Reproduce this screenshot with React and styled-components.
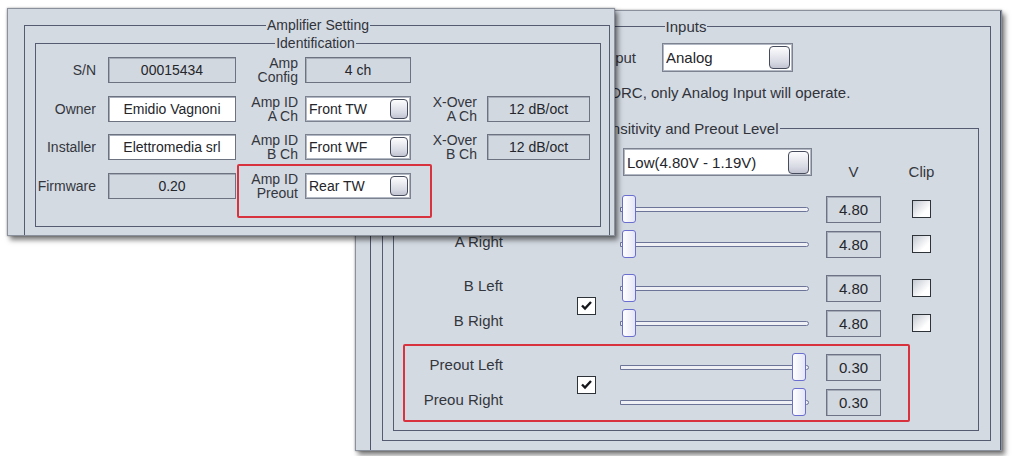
import React from 'react';
import styled, { createGlobalStyle } from 'styled-components';

const identRows = [
  [
    { label: 'S/N' }, { value: '00015434' },
    { label: 'Amp\nConfig' }, { value: '4 ch' },
    null, null,
  ],
  [
    { label: 'Owner' }, { value: 'Emidio Vagnoni', editable: true },
    { label: 'Amp ID\nA Ch' }, { combo: 'Front TW' },
    { label: 'X-Over\nA Ch' }, { value: '12 dB/oct' },
  ],
  [
    { label: 'Installer' }, { value: 'Elettromedia srl', editable: true },
    { label: 'Amp ID\nB Ch' }, { combo: 'Front WF' },
    { label: 'X-Over\nB Ch' }, { value: '12 dB/oct' },
  ],
  [
    { label: 'Firmware' }, { value: '0.20' },
    { label: 'Amp ID\nPreout' }, { combo: 'Rear TW' },
    null, null,
  ],
];

// padding between a label and its field, per label column
const labelGaps = [12, 7, 10];

const pairs = [
  {
    linked: true,
    rows: [
      { label: 'A Left', level: 0, value: '4.80', clip: true },
      { label: 'A Right', level: 0, value: '4.80', clip: true },
    ],
  },
  {
    linked: true,
    rows: [
      { label: 'B Left', level: 0, value: '4.80', clip: true },
      { label: 'B Right', level: 0, value: '4.80', clip: true },
    ],
  },
  {
    linked: true,
    rows: [
      { label: 'Preout Left', level: 1, value: '0.30' },
      { label: 'Preou Right', level: 1, value: '0.30' },
    ],
  },
];

const GlobalStyle = createGlobalStyle`
  html, body {
    margin: 0;
    padding: 0;
    background: #ffffff;
  }
  body {
    font-family: "Liberation Sans", Arial, sans-serif;
    color: #30333a;
  }
`;

const Desk = styled.div`
  position: relative;
  width: 1023px;
  height: 456px;
  overflow: hidden;
  background: #ffffff;
`;

const Window = styled.div`
  position: absolute;
  left: ${p => p.$x}px;
  top: ${p => p.$y}px;
  width: ${p => p.$w}px;
  height: ${p => p.$h}px;
  box-sizing: border-box;
  background: #d4dae2;
  border: 1px solid #8b919c;
  box-shadow: 0 0 2px rgba(0, 0, 0, 0.35), 3px 4px 5px rgba(0, 0, 0, 0.5);
  overflow: hidden;
`;

const FrontBody = styled.div`
  padding: 9px 4px 0 16px;
`;

const BackBody = styled.div`
  height: 100%;
  box-sizing: border-box;
  padding-left: 14px;
`;

const Client = styled.div`
  height: 100%;
  box-sizing: border-box;
  border-left: 1px solid #4f566b;
  border-right: 1px solid #4f566b;
  padding: 8px 9px 0 11px;
`;

const Group = styled.fieldset`
  margin: 0;
  min-width: 0;
  border: 1px solid #555c72;
  padding: ${p => p.$pad};
`;

const Legend = styled.legend`
  margin: 0 auto;
  padding: 0 1px;
  font-size: ${p => p.$size}px;
  line-height: ${p => p.$size}px;
  color: #30333a;
`;

const IdGrid = styled.div`
  display: grid;
  grid-template-columns: 68px 128px 69px 106px 76px 103px;
  grid-auto-rows: 26px;
  row-gap: 12.5px;
`;

const FieldLabel = styled.div`
  justify-self: end;
  align-self: center;
  padding-right: ${p => p.$gap}px;
  text-align: right;
  white-space: pre-line;
  font-size: 14px;
  line-height: 14px;
  color: #33363d;
`;

const Field = styled.div`
  box-sizing: border-box;
  height: 26px;
  display: flex;
  align-items: center;
  justify-content: center;
  font-size: 14px;
  color: #24262b;
  white-space: nowrap;
  border: 1px solid #6d7281;
  background: ${p => (p.$editable ? '#ffffff' : '#d2d8e0')};
  box-shadow: inset 1px 1px 0 #a7adb8;
`;

const Combo = styled.div`
  box-sizing: border-box;
  display: flex;
  align-items: center;
  width: ${p => p.$w}px;
  height: ${p => p.$h}px;
  padding: 0 2px 0 3px;
  border: 1px solid #7c8290;
  box-shadow: inset 0 0 0 1px #b3b9c4;
  background: #ffffff;
  font-size: ${p => p.$size}px;
  color: #24262b;
  white-space: nowrap;
`;

const ComboText = styled.span`
  flex: 1;
  overflow: hidden;
`;

const ComboButton = styled.span`
  flex: 0 0 auto;
  width: ${p => p.$size}px;
  height: ${p => p.$size + 2}px;
  box-sizing: border-box;
  border: 1.5px solid #464c5c;
  border-radius: 4px;
  background: linear-gradient(#fdfdfe, #d8dae4 70%, #c2c4d2);
`;

const Highlight = styled.div`
  position: absolute;
  left: ${p => p.$x}px;
  top: ${p => p.$y}px;
  width: ${p => p.$w}px;
  height: ${p => p.$h}px;
  box-sizing: border-box;
  border: 2px solid #d8323e;
  border-radius: 2px;
  pointer-events: none;
`;

const InputRow = styled.div`
  display: flex;
  align-items: center;
  gap: 26px;
  margin-top: 9px;
`;

const RowLabel = styled.div`
  flex: 0 0 243px;
  text-align: right;
  font-size: 15px;
  color: #33363d;
`;

const Note = styled.p`
  margin: 12px 0 0;
  padding-left: 183px;
  font-size: 15px;
  line-height: 17px;
  color: #30333a;
  white-space: nowrap;
`;

const SensWrap = styled.div`
  margin-top: 20px;
`;

const SensBody = styled.div`
  display: flex;
  flex-direction: column;
  gap: 16px;
  padding-left: 9px;
`;

const SensGrid = styled.div`
  display: grid;
  grid-template-columns: 100px 117px 189px 72px 59px;
  grid-template-rows: ${p => (p.$pair ? '28px 28px' : '28px')};
  row-gap: 7px;
  margin-bottom: ${p => (p.$header ? 3 : 0)}px;
`;

const SensLabel = styled.div`
  grid-column: 1;
  grid-row: ${p => p.$row};
  justify-self: end;
  align-self: center;
  margin-bottom: 5px;
  font-size: 15px;
  color: #33363d;
  white-space: nowrap;
`;

const HeaderCell = styled.div`
  grid-column: ${p => p.$col};
  justify-self: end;
  align-self: end;
  display: flex;
  justify-content: center;
  width: ${p => p.$w}px;
  margin: 0 ${p => p.$right}px -5px 0;
  font-size: 15px;
  line-height: 18px;
  color: #33363d;
`;

const ComboCell = styled.div`
  grid-column: 3;
  margin-left: 3px;
`;

const Check = styled.span`
  display: inline-flex;
  align-items: center;
  justify-content: center;
  width: 19px;
  height: 18px;
  box-sizing: border-box;
  border: 1.5px solid #2e3239;
  background: ${p => (p.$checked ? '#ffffff' : 'linear-gradient(135deg, #c4c9d2, #ffffff 70%)')};
`;

const LinkCheck = styled.div`
  grid-column: 2;
  grid-row: 1 / span 2;
  align-self: center;
  justify-self: start;
  margin-left: 74px;
  display: flex;
`;

const ClipCell = styled.div`
  grid-column: 5;
  grid-row: ${p => p.$row};
  justify-self: end;
  align-self: center;
  margin-right: 9px;
  display: flex;
`;

const Slider = styled.div`
  grid-column: 3;
  grid-row: ${p => p.$row};
  position: relative;
`;

const Track = styled.div`
  position: absolute;
  left: 0;
  right: 0;
  top: 12px;
  height: 5px;
  box-sizing: border-box;
  border: 1px solid #6c7498;
  border-radius: 0 3px 3px 0;
  background: #eef0f6;
`;

const Thumb = styled.div`
  position: absolute;
  top: 0;
  width: 14px;
  height: 28px;
  box-sizing: border-box;
  border: 1.5px solid #6a6ecf;
  border-radius: 3px;
  background: linear-gradient(90deg, #ffffff, #e4e6f5);
`;

const ValueBox = styled.div`
  grid-column: 4;
  grid-row: ${p => p.$row};
  justify-self: end;
  align-self: center;
  box-sizing: border-box;
  width: 55px;
  height: 27px;
  display: flex;
  align-items: center;
  justify-content: center;
  font-size: 15px;
  color: #24262b;
  background: #d2d8e0;
  border: 1px solid #6d7385;
  box-shadow: inset 1px 1px 0 #a7adb8;
`;

const CheckMark = () => (
  <svg width="13" height="11" viewBox="0 0 13 11">
    <path d="M2 5.5 L5 8.5 L11 2" fill="none" stroke="#15171b" strokeWidth="2.4" strokeLinejoin="miter" />
  </svg>
);

const ComboBox = ({ text, w, h, size, button }) => (
  <Combo $w={w} $h={h} $size={size}>
    <ComboText>{text}</ComboText>
    <ComboButton $size={button} />
  </Combo>
);

const TRACK = 189;
const THUMB = 14;

const SliderPair = ({ pair }) => (
  <SensGrid $pair>
    {pair.rows.map((row, i) => (
      <React.Fragment key={row.label}>
        <SensLabel $row={i + 1}>{row.label}</SensLabel>
        <Slider $row={i + 1}>
          <Track />
          <Thumb style={{ left: 2 + row.level * (TRACK - 4 - THUMB - 1) }} />
        </Slider>
        <ValueBox $row={i + 1}>{row.value}</ValueBox>
        {row.clip && (
          <ClipCell $row={i + 1}>
            <Check />
          </ClipCell>
        )}
      </React.Fragment>
    ))}
    {pair.linked && (
      <LinkCheck>
        <Check $checked>
          <CheckMark />
        </Check>
      </LinkCheck>
    )}
  </SensGrid>
);

const IdentCell = ({ cell, col }) => {
  if (!cell) return <span />;
  if (cell.label) return <FieldLabel $gap={labelGaps[col / 2]}>{cell.label}</FieldLabel>;
  if (cell.combo) return <ComboBox text={cell.combo} w={106} h={26} size={14} button={18} />;
  return <Field $editable={cell.editable}>{cell.value}</Field>;
};

const InputsWindow = () => (
  <Window $x={355} $y={10} $w={647} $h={441}>
    <BackBody>
      <Client>
        <Group $pad="0 11px 9px 10px">
          <Legend $size={15}>Inputs</Legend>
          <InputRow>
            <RowLabel>Input</RowLabel>
            <ComboBox text="Analog" w={131} h={29} size={15} button={21} />
          </InputRow>
          <Note>With DRC, only Analog Input will operate.</Note>
          <SensWrap>
            <Group $pad="12px 0 14px 0">
              <Legend $size={15}>Sensitivity and Preout Level</Legend>
              <SensBody>
                <SensGrid $header>
                  <ComboCell>
                    <ComboBox text="Low(4.80V - 1.19V)" w={189} h={28} size={15} button={21} />
                  </ComboCell>
                  <HeaderCell $col={4} $w={55} $right={0}>V</HeaderCell>
                  <HeaderCell $col={5} $w={19} $right={9}>Clip</HeaderCell>
                </SensGrid>
                {pairs.map((pair, i) => (
                  <SliderPair key={i} pair={pair} />
                ))}
              </SensBody>
            </Group>
          </SensWrap>
        </Group>
      </Client>
      <Highlight $x={47} $y={333} $w={507} $h={78} />
    </BackBody>
  </Window>
);

const AmplifierWindow = () => (
  <Window $x={7} $y={8} $w={608} $h={228}>
    <FrontBody>
      <Group $pad="4px 8px 20px 10px">
        <Legend $size={14}>Amplifier Setting</Legend>
        <Group $pad="7px 9px 27px 4px">
          <Legend $size={14}>Identification</Legend>
          <IdGrid>
            {identRows.map((row, r) =>
              row.map((cell, c) => <IdentCell key={`${r}-${c}`} cell={cell} col={c} />)
            )}
          </IdGrid>
        </Group>
      </Group>
    </FrontBody>
    <Highlight $x={229} $y={155} $w={195} $h={54} />
  </Window>
);

const App = () => (
  <>
    <GlobalStyle />
    <Desk>
      <InputsWindow />
      <AmplifierWindow />
    </Desk>
  </>
);

export default App;
